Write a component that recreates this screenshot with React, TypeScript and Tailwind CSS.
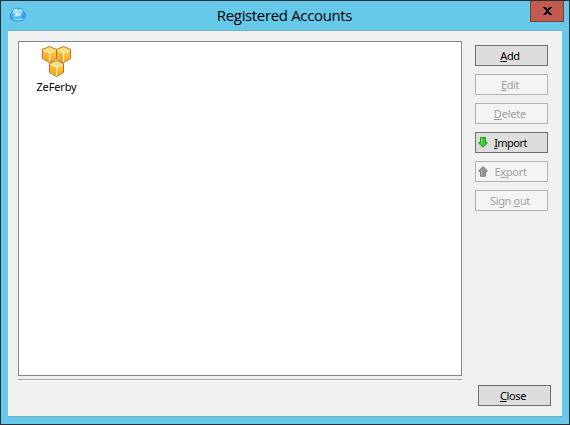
import type { ReactNode } from "react";

function CloudIcon() {
  return (
    <svg width="18" height="16" viewBox="0 0 18 16">
      <defs>
        <radialGradient id="cloud" cx=".42" cy=".38" r=".65">
          <stop offset="0" stopColor="#c4edff" />
          <stop offset=".45" stopColor="#6cc6fa" />
          <stop offset=".8" stopColor="#2b9df0" />
          <stop offset="1" stopColor="#5cc4f8" />
        </radialGradient>
      </defs>
      <path d="M4 3.200C5 1.300 8 .8 10 1.300c2 0 3.500 1.200 4 3 2 1.200 2.700 3.400 2.300 5.400-.3 2.500-2.300 4-4.800 3.800-2 .8-4.500.8-6.200 0C2.800 13.300 1.300 11.500 1.400 9.300 1.200 7.500 2 6 3.300 5.300c0-.8.2-1.500.7-2.100Z" fill="url(#cloud)" stroke="#2585cc" strokeWidth=".8" />
      <path d="M4.500 4.800c.5-1.800 2.300-2.600 4-2M10.300 3c1.500 0 2.400 1 2.500 2.200" fill="none" stroke="#dff6ff" strokeWidth="1.500" />
      <path d="M6.500 9.500c0-1.500 1-2 2.500-2h3" fill="none" stroke="#dcf6ff" strokeWidth="1.400" />
      <path d="M3 7.500c1 .5 2 .3 3-.2M13 7c1 .8 1.500 2 1 3.200" fill="none" stroke="#2596e8" />
      <path d="M4.500 12c2.200 1 6.500 1 8.700-.4" fill="none" stroke="#9cecff" strokeWidth="1.300" />
    </svg>
  );
}

function Cube({ x, y }: { x: number; y: number }) {
  return (
    <g transform={`translate(${x} ${y})`} strokeLinejoin="round">
      <path d="M.5 3.500 7.500.5l7 3v9l-7 4-7-4Z" fill="#f9b51f" stroke="#c06a1a" />
      <path d="M1 4 7.500 7v9L1 12.300Z" fill="url(#left)" />
      <path d="M14 4 7.500 7v9l6.500-3.700Z" fill="url(#right)" />
      <path d="M1.500 3.700 7.500 1l6 2.700-6 2.800Z" fill="#ffe074" />
      <path d="M1.300 4.300 7.500 7l6.200-2.700M7.500 7v8.500" fill="none" stroke="#fff8d8" strokeWidth="1.200" />
    </g>
  );
}

function CubesIcon() {
  return (
    <svg width="30" height="31" viewBox="0 0 30 31">
      <defs>
        <linearGradient id="left" x1="0" y1="0" x2="1" y2="1">
          <stop offset="0" stopColor="#ffc63c" />
          <stop offset="1" stopColor="#f29a12" />
        </linearGradient>
        <linearGradient id="right" x1="0" y1="0" x2="0" y2="1">
          <stop offset="0" stopColor="#ffd65a" />
          <stop offset="1" stopColor="#ffa508" />
        </linearGradient>
      </defs>
      <Cube x={0} y={0} />
      <Cube x={14} y={0} />
      <Cube x={7} y={14} />
    </svg>
  );
}

function Arrow({ up = false }: { up?: boolean }) {
  return (
    <svg className="absolute left-[2px] top-[4px]" width="10" height="11" viewBox="0 0 10 11">
      {up ? (
        <>
          <path d="M5 .5 9 4.500V5.500H7.500v4.700h-5V5.500H1V4.500Z" fill="#969696" stroke="#7c7c7c" />
          <path d="M3.500 4.700v4.800" stroke="#b5b5b5" />
        </>
      ) : (
        <>
          <path d="M2.500.5h5v4.800H9v1L5 10.300 1 6.300v-1h1.500Z" fill="#35cf27" stroke="#279223" />
          <path d="M3.600 1.200v5.300" stroke="#8cf078" />
        </>
      )}
    </svg>
  );
}

function PushButton({ children, disabled = false, pad = "" }: { children: ReactNode; disabled?: boolean; pad?: string }) {
  return (
    <button
      disabled={disabled}
      className={`relative flex h-[21px] w-[73px] shrink-0 items-center justify-center border text-[11px] leading-[19px] whitespace-pre ${
        disabled ? "border-[#adb2b5] bg-[#f4f4f4] text-[#a0a0a0]" : "border-[#707070] bg-[#dddddd] text-black"
      } ${pad}`}
    >
      {children}
    </button>
  );
}

function Key({ children }: { children: string }) {
  return <span className="underline decoration-1 underline-offset-[1px]">{children}</span>;
}

export default function App() {
  return (
    <div className="flex h-[425px] w-[570px] flex-col overflow-hidden border border-[#2b2f36] bg-[#66c9ea] px-[7px] pb-[7px] font-['Noto_Sans','Open_Sans',sans-serif] text-black">
      <header className="flex h-[29px] shrink-0 items-start">
        <div className="ml-[1px] mt-[6px] w-[35px] shrink-0"><CloudIcon /></div>
        <h1 className="mt-[3px] flex-1 pr-[5px] text-center font-['Open_Sans','Noto_Sans',sans-serif] text-[15px] leading-[22px] tracking-[-0.35px] whitespace-nowrap">Registered Accounts</h1>
        <button className="-mr-[2px] flex h-[21px] w-[34px] shrink-0 items-center justify-center border border-t-0 border-[#71403f] bg-[#c35a50]">
          <svg width="9" height="8" viewBox="0 0 9 8" shapeRendering="crispEdges">
            <path d="M0 0h3v1h1v1h1V1h1V0h3v1H8v1H7v1H6v2h1v1h1v1h1v1H6V7H5V6H4v1H3v1H0V7h1V6h1V5h1V3H2V2H1V1H0Z" />
          </svg>
        </button>
      </header>
      <main className="flex flex-1 flex-col border-y border-[#75aec6] bg-[#f0f0f0] pl-[10px]">
        <div className="flex pt-[10px]">
          <section className="h-[335px] w-[444px] shrink-0 border border-[#828790] bg-white">
            <div className="flex w-[75px] flex-col items-center pt-[4px]">
              <CubesIcon />
              <span className="mt-[2px] text-[11px] leading-[16px] tracking-[-0.15px]">ZeFerby</span>
            </div>
          </section>
          <nav className="ml-[13px] mt-[4px] flex flex-col gap-2 tracking-[-0.4px]">
            <PushButton pad="pr-[3px]"><Key>A</Key>dd</PushButton>
            <PushButton disabled pad="pr-[3px]"><Key>E</Key>dit</PushButton>
            <PushButton disabled pad="pr-[3px] tracking-[-0.2px]"><Key>D</Key>elete</PushButton>
            <PushButton pad="pr-[2px] tracking-[-0.55px]"><Arrow /><Key>I</Key>mport</PushButton>
            <PushButton disabled pad="pr-[2px] tracking-[-0.3px]"><Arrow up />E<Key>x</Key>port</PushButton>
            <PushButton disabled pad="pr-[3px] tracking-[-0.35px]">Sign <Key>o</Key>ut</PushButton>
          </nav>
        </div>
        <div className="mt-[3px] h-[2px] w-[444px] border-b border-white bg-[#a0a0a0]" />
        <div className="flex justify-end pr-[11px] pt-[4px] tracking-[-0.35px]">
          <PushButton pad="pr-[3px]"><Key>C</Key>lose</PushButton>
        </div>
      </main>
    </div>
  );
}
